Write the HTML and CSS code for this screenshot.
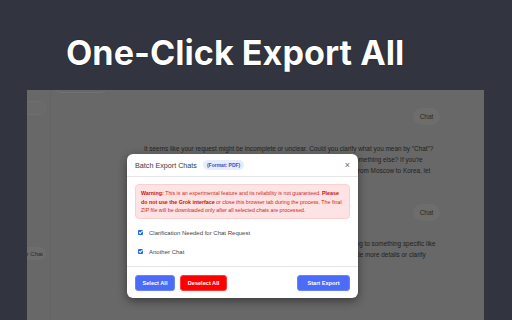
FILE: index.html
```html
<!DOCTYPE html>
<html>
<head>
<meta charset="utf-8">
<link rel="stylesheet" href="styles.css">
</head>
<body>
<div class="page">
  <h1 class="title">One-Click Export All</h1>
  <div class="screen">
    <aside class="side">
      <div class="side-pill"></div>
      <div class="side-chat"><span>Another Chat</span></div>
    </aside>
    <main class="main">
      <div class="topbar">
        <div class="private">&#9673; Private mode</div>
        <div class="top-icons">
          <svg width="6" height="6" viewBox="0 0 6 6"><rect x="0.5" y="0.5" width="5" height="5" rx="1" fill="none" stroke="#2a2a2a" stroke-width="0.8"/></svg>
          <svg width="6" height="6" viewBox="0 0 6 6"><path d="M1 1L5 5M5 1L1 5" stroke="#2a2a2a" stroke-width="0.8"/></svg>
        </div>
      </div>
      <div class="thread">
        <div class="bubble b1">Chat</div>
        <div class="answer a1">
          <div class="line">It seems like your request might be incomplete or unclear. Could you clarify what you mean by "Chat"?</div>
          <div class="line">Are you looking to start a new conversation with me, or is it shorthand for something else? If you're</div>
          <div class="line">continuing from a previous topic we discussed earlier, like the train journey from Moscow to Korea, let</div>
        </div>
        <div class="bubble b2">Chat</div>
        <div class="answer a2">
          <div class="line">Could you please clarify what you mean by "Chat"? Are you perhaps referring to something specific like</div>
          <div class="line">a chat app, a chat feature, a conversation, or something else? Please provide more details or clarify</div>
        </div>
      </div>
    </main>
  </div>

  <div class="modal">
    <div class="m-head">
      <span class="m-title">Batch Export Chats</span>
      <span class="badge">(Format: PDF)</span>
      <span class="close">&#215;</span>
    </div>
    <div class="m-body">
      <div class="warn"><b>Warning:</b> This is an experimental feature and its reliability is not guaranteed. <b>Please</b><br><b>do not use the Grok interface</b> or close this browser tab during the process. The final<br>ZIP file will be downloaded only after all selected chats are processed.</div>
      <div class="list">
        <label class="item"><span class="cb"></span><span>Clarification Needed for Chat Request</span></label>
        <label class="item"><span class="cb"></span><span>Another Chat</span></label>
      </div>
    </div>
    <div class="m-foot">
      <button class="btn blue">Select All</button>
      <button class="btn red">Deselect All</button>
      <button class="btn blue push">Start Export</button>
    </div>
  </div>
</div>
</body>
</html>
```

FILE: styles.css
```css
* { box-sizing: border-box; }
html, body { margin: 0; padding: 0; }
body { width: 512px; height: 320px; overflow: hidden; background: #32353f; }
.page { position: relative; width: 512px; height: 320px; overflow: hidden; }

.title {
  margin: 0;
  padding: 35px 0 0 66px;
  height: 90px;
  font-family: Inter, "Noto Sans", sans-serif;
  font-weight: 700;
  font-size: 34.2px;
  line-height: 35px;
  color: #ffffff;
  text-shadow: 0 0 1px #000;
}

.screen {
  margin-left: 27px;
  width: 457px;
  height: 230px;
  background: #686868;
  display: flex;
  overflow: hidden;
}

.side {
  width: 24px;
  border-right: 1px solid #636363;
  display: flex;
  flex-direction: column;
  align-items: flex-end;
  flex: none;
}
.side-pill {
  margin-top: 11px;
  margin-right: 4px;
  width: 30px;
  height: 14px;
  border-radius: 0 7px 7px 0;
  border: 1px solid #6f6f6f;
  background: #6a6a6a;
}
.side-chat {
  margin-top: 132px;
  margin-right: 4px;
  width: 20px;
  height: 13px;
  border-radius: 0 6px 6px 0;
  background: #6d6d6d;
  overflow: hidden;
  display: flex;
  justify-content: flex-end;
  align-items: center;
  padding-right: 3px;
}
.side-chat span {
  font-family: "Liberation Sans", Arial, sans-serif;
  font-size: 6px;
  color: #2a2a2a;
  white-space: nowrap;
}

.main { flex: 1; display: flex; flex-direction: column; }

.topbar {
  display: flex;
  justify-content: space-between;
  align-items: flex-end;
  margin-top: -10px;
  height: 13px;
  padding: 0 14px 0 4px;
}
.private {
  height: 13px;
  width: 52px;
  border: 1px solid #727272;
  border-radius: 7px;
  font-family: "Liberation Sans", Arial, sans-serif;
  font-size: 6px;
  line-height: 11px;
  color: #3a3a3a;
  padding-left: 6px;
  white-space: nowrap;
  overflow: hidden;
}
.top-icons { display: flex; gap: 10px; margin-bottom: 8px; }

.thread {
  margin-left: 93px;
  width: 296px;
  display: flex;
  flex-direction: column;
  font-family: "Liberation Sans", Arial, sans-serif;
  color: #222222;
}
.bubble {
  align-self: flex-end;
  width: 27px;
  height: 17px;
  border-radius: 9px;
  background: #6d6d6d;
  font-size: 6.5px;
  line-height: 17px;
  text-align: center;
  color: #2a2a2a;
}
.b1 { margin-top: 15px; }
.b2 { margin-top: 28px; }
.answer { font-size: 6.4px; line-height: 11px; }
.a1 { margin-top: 18px; }
.a2 { margin-top: 17px; }
.line { white-space: nowrap; }

.modal {
  position: absolute;
  left: 127px;
  top: 154px;
  width: 231px;
  height: 144px;
  background: #ffffff;
  border-radius: 6px;
  box-shadow: 0 3px 10px rgba(0,0,0,0.45);
  font-family: "Liberation Sans", Arial, sans-serif;
  display: flex;
  flex-direction: column;
  overflow: hidden;
}
.m-head {
  height: 23px;
  flex: none;
  display: flex;
  align-items: center;
  padding: 0 8px;
  border-bottom: 1px solid #e6e6e6;
}
.m-title { font-size: 7.2px; color: #3a3a3a; }
.badge {
  margin-left: 6px;
  height: 10px;
  padding: 0 4px;
  border-radius: 5px;
  background: #e4ecfd;
  color: #2f55c8;
  font-weight: 700;
  font-size: 5px;
  line-height: 10px;
}
.close { margin-left: auto; font-size: 9px; color: #666; line-height: 10px; }

.m-body { flex: 1; padding: 7px 8px 0 8px; border-bottom: 1px solid #e6e6e6; }
.warn {
  height: 35px;
  background: #fde3e3;
  border: 1px solid #fbd0d0;
  border-radius: 4px;
  padding: 4px 4px 0 5px;
  font-size: 5.3px;
  line-height: 8.5px;
  color: #d32626;
  white-space: nowrap;
  overflow: hidden;
}
.warn b { color: #c81010; }
.list { display: flex; flex-direction: column; padding-top: 4px; }
.item {
  display: flex;
  align-items: center;
  height: 19px;
  font-size: 6px;
  line-height: 8px;
  color: #444444;
}
.cb {
  flex: none;
  width: 5px;
  height: 5px;
  margin: 0 6px 0 3px;
  border-radius: 1px;
  background: #1a6ce8;
  position: relative;
}
.cb::after {
  content: "";
  position: absolute;
  left: 1.6px;
  top: 0.4px;
  width: 1.2px;
  height: 2.6px;
  border: solid #fff;
  border-width: 0 0.8px 0.8px 0;
  transform: rotate(45deg);
}

.m-foot {
  height: 31px;
  flex: none;
  display: flex;
  align-items: center;
  gap: 5px;
  padding: 0 8px 0 8px;
}
.btn {
  height: 16px;
  border: 1px solid transparent;
  border-radius: 3px;
  color: #ffffff;
  font-family: "Liberation Sans", Arial, sans-serif;
  font-weight: 700;
  font-size: 5.6px;
  padding: 0;
}
.blue { background: #4d6bf9; border-color: #6a84fa; }
.red { background: #ff0000; border-color: #ff3a3a; width: 47px; }
.btn.blue { width: 40px; }
.btn.push { margin-left: auto; width: 53px; }
```
